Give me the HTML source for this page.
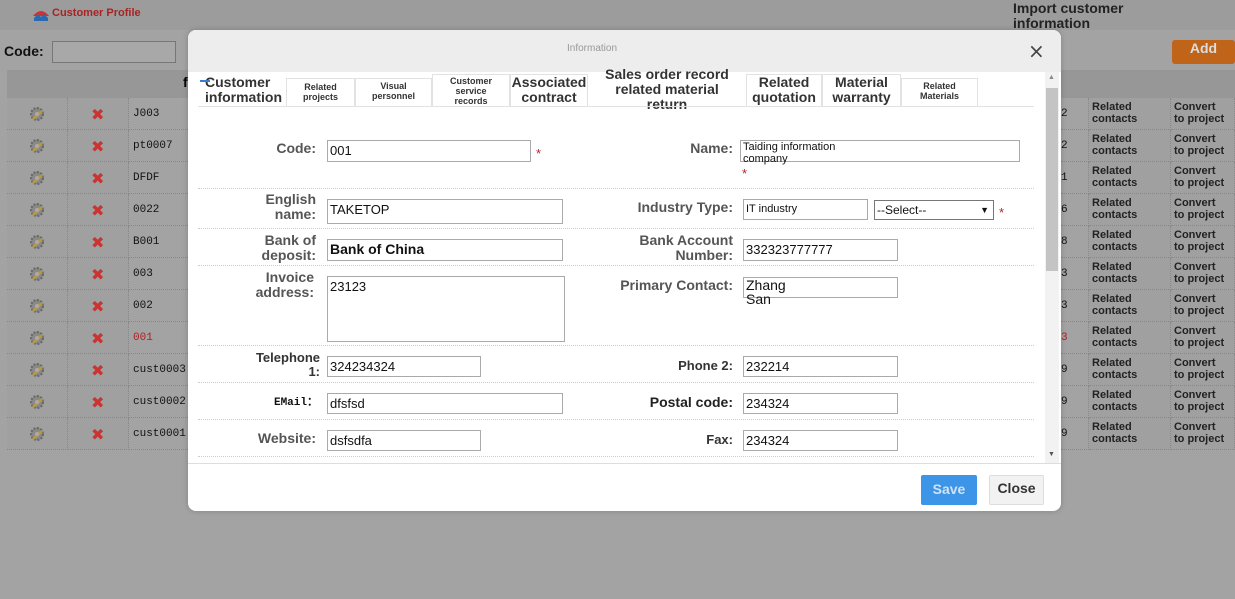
<!DOCTYPE html>
<html><head><meta charset="utf-8"><style>
*{box-sizing:border-box;margin:0;padding:0}
body{width:1235px;height:599px;overflow:hidden;background:#a3a3a3;font-family:"Liberation Sans","DejaVu Sans",sans-serif;position:relative}
.a{position:absolute}
.top{left:0;top:0;width:1235px;height:30px;background:#9c9c9c}
.cell{position:absolute;border-right:1px dotted #888;border-bottom:1px dotted #888;height:32px;font-size:11px;white-space:nowrap;overflow:hidden}
.mono{font-family:"Liberation Mono",monospace;font-size:11px;color:#111}
.rc{font-size:11px;font-weight:bold;color:#222;line-height:12px}
.modal{left:188px;top:30px;width:873px;height:481px;background:#fff;border-radius:8px;overflow:hidden;box-shadow:0 0 6px rgba(0,0,0,.2)}
.mh{left:0;top:0;width:873px;height:42px;background:#ededed}
.tab{position:absolute;top:48px;height:28px;border:1px solid #e2e2e2;border-bottom:none;text-align:center;font-weight:bold;color:#333;background:#fff}
.lbl{position:absolute;text-align:right;font-weight:bold;color:#555;font-size:14px;line-height:15px}
.inp{position:absolute;border:1px solid #aaa;background:#fff;font-family:"Liberation Sans",sans-serif;font-size:13px;padding-left:2px;line-height:19px;color:#111}
.hr{position:absolute;left:10px;width:836px;border-top:1px dotted #ccc}
.star{position:absolute;color:#b22;font-size:13px}
</style></head><body>
<div class="a top"></div>
<svg class="a" style="left:32px;top:8px" width="18" height="14" viewBox="0 0 18 14"><path d="M1 8 Q9 -2 17 8 Z" fill="#c33"/><path d="M2 10 L6 6 L9 9 L12 6 L16 10 L16 13 L2 13Z" fill="#2a6ab0"/></svg>
<div class="a" style="left:52px;top:7px;font-size:11px;color:#a22;font-weight:bold">Customer Profile</div>
<div class="a" style="left:1013px;top:1px;font-size:14px;font-weight:bold;color:#222;line-height:15px">Import customer<br>information</div>
<div class="a" style="left:4px;top:43px;font-size:14px;font-weight:bold;color:#111">Code:</div>
<div class="a" style="left:52px;top:41px;width:124px;height:22px;border:1px solid #777;background:#a8a8a8"></div>
<div class="a" style="left:1172px;top:40px;width:63px;height:24px;background:#c0641a;border-radius:3px;color:#ddd;font-weight:bold;font-size:14px;text-align:center;line-height:17px">Add</div>
<div class="a" style="left:7px;top:70px;width:1228px;height:28px;background:#979797"></div>
<div class="a" style="left:183px;top:74px;font-size:14px;font-weight:bold">f</div>
<div class="a" style="left:1056px;top:74px;font-size:14px;font-weight:bold">l</div>
<div id="rows"></div>
<script>
var ids=["J003","pt0007","DFDF","0022","B001","003","002","001","cust0003","cust0002","cust0001"];
var nums=["12","02","11","06","18","13","13","13","29","29","29"];
var h="";
for(var i=0;i<11;i++){var y=98+i*32;
h+='<div class="cell" style="left:7px;top:'+y+'px;width:61px;background:#a0a0a0"><svg style="position:absolute;left:22px;top:8px" width="16" height="16" viewBox="0 0 16 16"><circle cx="8" cy="8" r="6" fill="#888" stroke="#666" stroke-dasharray="2 1.5" stroke-width="2"/><path d="M3 12 L12 4 L14 6 L5 14Z" fill="#b59a40"/><circle cx="8" cy="8" r="2" fill="#aaa"/></svg></div>';
h+='<div class="cell" style="left:68px;top:'+y+'px;width:61px;background:#a0a0a0"><div style="position:absolute;left:23px;top:7px;color:#c33;font-size:16px;font-weight:bold">✖</div></div>';
h+='<div class="cell mono" style="left:129px;top:'+y+'px;width:61px;padding:10px 0 0 4px;'+(i==7?'color:#a22':'')+'">'+ids[i]+'</div>';
h+='<div class="cell mono" style="left:1061px;top:'+y+'px;width:28px;padding-top:10px;'+(i==7?'color:#a22':'')+'">'+nums[i].slice(1)+'</div>';
h+='<div class="cell rc" style="left:1089px;top:'+y+'px;width:82px;padding:3px 0 0 3px;background:#a0a0a0">Related<br>contacts</div>';
h+='<div class="cell rc" style="left:1171px;top:'+y+'px;width:64px;padding:3px 0 0 3px;background:#a0a0a0">Convert<br>to project</div>';}
document.getElementById("rows").innerHTML=h;
</script>
<div class="a modal">
<div class="a mh"></div>
<div class="a" style="left:0;top:13px;width:808px;text-align:center;font-size:10px;color:#999">Information</div>
<div class="a" style="left:840px;top:9px;font-size:20px;color:#444;font-family:'DejaVu Sans'">×</div>
<div class="tab" style="left:10px;width:87px;border:none;font-size:14px;line-height:15px;top:45px;text-align:left;padding-left:7px">Customer<br>information</div>
<div class="a" style="left:12px;top:50px;width:10px;height:2px;background:#3a7bd5"></div>
<div class="tab" style="left:98px;width:69px;font-size:9px;line-height:10px;padding-top:3px">Related<br>projects</div>
<div class="tab" style="left:167px;width:77px;font-size:9px;line-height:10px;padding-top:2px">Visual<br>personnel</div>
<div class="tab" style="left:244px;width:78px;font-size:9px;line-height:10px;top:44px;height:32px;padding-top:1px">Customer<br>service<br>records</div>
<div class="tab" style="left:322px;width:78px;font-size:14px;line-height:15px;top:44px;height:32px;padding-top:0">Associated<br>contract</div>
<div class="tab" style="left:400px;width:158px;font-size:14px;line-height:15px;top:37px;border:none;background:none">Sales order record<br>related material<br>return</div>
<div class="tab" style="left:558px;width:76px;font-size:14px;line-height:15px;top:44px;height:32px;padding-top:0">Related<br>quotation</div>
<div class="tab" style="left:634px;width:79px;font-size:14px;line-height:15px;top:44px;height:32px;padding-top:0">Material<br>warranty</div>
<div class="tab" style="left:713px;width:77px;font-size:9px;line-height:10px;padding-top:2px">Related<br>Materials</div>
<div class="a" style="left:10px;top:76px;width:836px;border-top:1px solid #e2e2e2"></div>
<div class="a" style="left:857px;top:42px;width:14px;height:391px;background:#f2f2f2"></div>
<div class="a" style="left:858px;top:58px;width:12px;height:183px;background:#c4c4c4"></div>
<div class="a" style="left:860px;top:44px;font-size:7px;color:#888">▲</div>
<div class="a" style="left:860px;top:421px;font-size:7px;color:#555">▼</div>

<div class="lbl" style="left:40px;width:88px;top:111px">Code:</div>
<div class="inp" style="left:139px;top:110px;width:204px;height:22px">001</div>
<div class="star" style="left:348px;top:116px">*</div>
<div class="lbl" style="left:440px;width:105px;top:111px">Name:</div>
<div class="inp" style="left:552px;top:110px;width:280px;height:22px;font-size:11px;line-height:12px;padding-top:0">Taiding information<br>company</div>
<div class="star" style="left:554px;top:136px">*</div>
<div class="hr" style="top:158px"></div>

<div class="lbl" style="left:40px;width:88px;top:162px">English<br>name:</div>
<div class="inp" style="left:139px;top:169px;width:236px;height:25px">TAKETOP</div>
<div class="lbl" style="left:400px;width:145px;top:170px">Industry Type:</div>
<div class="inp" style="left:555px;top:169px;width:125px;height:21px;font-size:11px">IT industry</div>
<div class="inp" style="left:686px;top:170px;width:120px;height:20px;font-size:12px;border-color:#777">--Select--<span style="position:absolute;right:4px;font-size:9px">▼</span></div>
<div class="star" style="left:811px;top:175px">*</div>
<div class="hr" style="top:198px"></div>

<div class="lbl" style="left:40px;width:88px;top:203px">Bank of<br>deposit:</div>
<div class="inp" style="left:139px;top:209px;width:236px;height:22px;font-weight:bold;font-size:14px">Bank of China</div>
<div class="lbl" style="left:400px;width:145px;top:203px">Bank Account<br>Number:</div>
<div class="inp" style="left:555px;top:209px;width:155px;height:22px">332323777777</div>
<div class="hr" style="top:235px"></div>

<div class="lbl" style="left:40px;width:86px;top:240px">Invoice<br>address:</div>
<div class="inp" style="left:139px;top:246px;width:238px;height:66px;line-height:20px">23123</div>
<div class="lbl" style="left:400px;width:145px;top:248px">Primary Contact:</div>
<div class="inp" style="left:555px;top:247px;width:155px;height:21px;font-size:14px;line-height:14px;padding-top:0;overflow:visible;background:none">Zhang<br>San</div>
<div class="hr" style="top:315px"></div>

<div class="lbl" style="left:40px;width:92px;top:321px;color:#333;font-size:13px;line-height:14px">Telephone<br>1:</div>
<div class="inp" style="left:139px;top:326px;width:154px;height:21px">324234324</div>
<div class="lbl" style="left:400px;width:145px;top:328px;color:#333;font-size:13px">Phone 2:</div>
<div class="inp" style="left:555px;top:326px;width:155px;height:21px">232214</div>
<div class="hr" style="top:352px"></div>

<div class="lbl" style="left:40px;width:90px;top:366px;font-family:'Liberation Mono';font-size:11px;color:#111">EMail：</div>
<div class="inp" style="left:139px;top:363px;width:236px;height:21px">dfsfsd</div>
<div class="lbl" style="left:400px;width:145px;top:365px;color:#222">Postal code:</div>
<div class="inp" style="left:555px;top:363px;width:155px;height:21px">234324</div>
<div class="hr" style="top:389px"></div>

<div class="lbl" style="left:40px;width:88px;top:401px">Website:</div>
<div class="inp" style="left:139px;top:400px;width:154px;height:21px">dsfsdfa</div>
<div class="lbl" style="left:400px;width:145px;top:402px;color:#333;font-size:13px">Fax:</div>
<div class="inp" style="left:555px;top:400px;width:155px;height:21px">234324</div>
<div class="hr" style="top:426px"></div>

<div class="a" style="left:0;top:433px;width:873px;border-top:1px solid #ddd"></div>
<div class="a" style="left:733px;top:445px;width:56px;height:30px;background:#3c95e6;color:#cfe3f8;font-weight:bold;font-size:14px;text-align:center;line-height:28px;border-radius:2px">Save</div>
<div class="a" style="left:801px;top:445px;width:55px;height:30px;background:#f2f2f2;border:1px solid #ddd;color:#333;font-size:14px;font-weight:bold;text-align:center;line-height:24px;border-radius:2px">Close</div>
</div>
</body></html>
